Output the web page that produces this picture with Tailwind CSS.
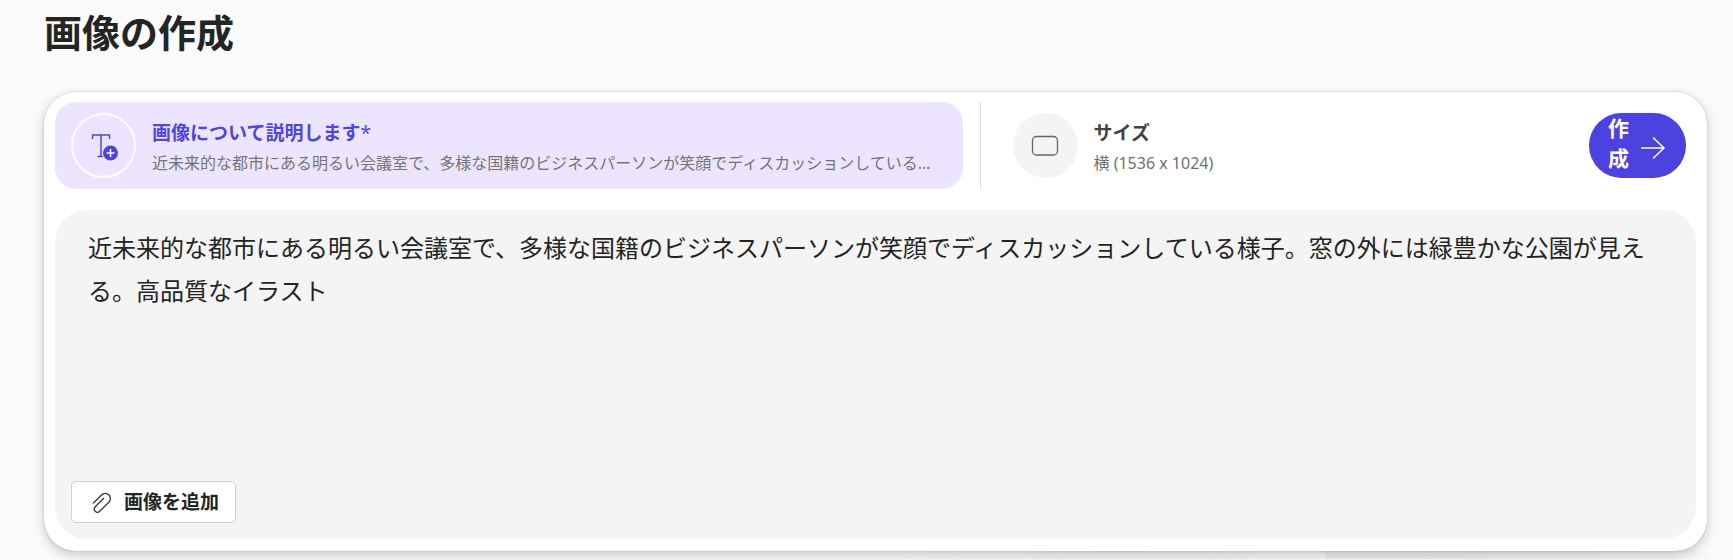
<!DOCTYPE html>
<html lang="ja">
<head>
  <meta charset="UTF-8" />
  <title>画像の作成</title>
  <meta name="viewport" content="width=device-width, initial-scale=1.0">
  <script src="https://cdn.jsdelivr.net/npm/@tailwindcss/browser@4"></script>
</head>
<body class="min-h-screen bg-[#fafafa] font-['Noto_Sans','Noto_Sans_CJK_JP',sans-serif] text-[#242424]">
<main class="pl-11 pr-[26px] pt-1">
  <h1 class="text-[38px] leading-[56px] font-bold">画像の作成</h1>

  <form class="relative mt-8 rounded-[32px] bg-white px-[11px] pt-[10px] pb-3 shadow-[0_0_2px_rgba(0,0,0,0.2),0_4px_12px_rgba(0,0,0,0.2)]">
    <div class="flex items-stretch">
      <!-- prompt tab -->
      <button type="button" class="flex min-w-0 flex-[50] items-center gap-4 rounded-[21px] bg-[#ede5ff] py-[11px] pl-4 pr-[18px] text-left">
        <span class="flex size-[65px] shrink-0 items-center justify-center rounded-full border-2 border-white">
          <svg class="size-8" viewBox="0 0 32 32" fill="none">
            <path d="M4.500 9V5H21.500V9M13 5V26.500M9.500 26.500H15" stroke="#4f46e1" stroke-width="1.500" />
            <circle cx="22.500" cy="23" r="7.500" fill="#4b42df" />
            <path d="M22.500 19V27M18.500 23H26.500" stroke="#fff" stroke-width="1.500" />
          </svg>
        </span>
        <span class="min-w-0 pt-[5px]">
          <span class="block text-[19px] leading-[30px] font-bold text-[#4f46e1]">画像について説明します<span class="font-normal">*</span></span>
          <span class="block truncate text-base leading-[30px] text-[#757575]">近未来的な都市にある明るい会議室で、多様な国籍のビジネスパーソンが笑顔でディスカッションしている様子。窓の外には緑豊かな公園が見える。高品質なイラスト</span>
        </span>
      </button>

      <div class="ml-[17px] mr-4 w-px bg-[#dcdcdc]"></div>

      <!-- size tab -->
      <button type="button" class="flex min-w-0 flex-[33] items-center gap-4 py-[11px] pl-4 text-left">
        <span class="flex size-[65px] shrink-0 items-center justify-center rounded-full bg-[#f4f4f4]">
          <svg class="size-8" viewBox="0 0 32 32" fill="none">
            <rect x="3.500" y="6.500" width="25" height="18.500" rx="4" stroke="#666" stroke-width="1.300" />
          </svg>
        </span>
        <span class="min-w-0 pt-[5px]">
          <span class="block text-[19px] leading-[30px] font-bold text-[#424242]">サイズ</span>
          <span class="block truncate text-base leading-[30px] text-[#707070]">横 (1536 x 1024)</span>
        </span>
      </button>

      <button type="submit" class="mr-[10px] flex h-[65px] w-[97px] items-center justify-center gap-[6px] self-center rounded-full bg-[#4b42df] text-white">
        <span class="w-6 pb-[6px] text-[21px] leading-[30px] font-bold">作成</span>
        <svg class="size-8" viewBox="0 0 32 32" fill="none" stroke="#fff" stroke-width="1.500">
          <path d="M4 18H27M16 7.500L27 18L16 28.500" />
        </svg>
      </button>
    </div>

    <div class="mt-[21px] flex flex-col items-start rounded-[32px] bg-[#f4f4f4] p-4">
      <label for="prompt" class="sr-only">画像について説明します</label>
      <textarea id="prompt" class="h-[255px] w-full resize-none px-[17px] text-2xl leading-[43px] outline-none">近未来的な都市にある明るい会議室で、多様な国籍のビジネスパーソンが笑顔でディスカッションしている様子。窓の外には緑豊かな公園が見える。高品質なイラスト</textarea>
      <button type="button" class="flex h-[42px] items-center gap-2 rounded-[5px] border border-[#d1d1d1] bg-white px-4 pt-px text-[19px] font-bold">
        <svg class="size-7" viewBox="0 0 28 28" fill="none" stroke="#333" stroke-width="1.300" stroke-linecap="round">
          <path d="M5.500 14L13.500 6A5 5 0 0 1 21 13L11.500 22.500A3.200 3.200 0 0 1 7 18L15.500 9.500" />
        </svg>
        画像を追加
      </button>
    </div>
  </form>

  <!-- top edge of the gallery -->
  <div class="flex h-2 justify-end">
    <div class="w-1/4 bg-linear-to-r from-[#f9f9f9] via-[#f1f3f4] to-[#f6f7f7]"></div>
    <div class="w-[23%] bg-linear-to-r from-[#ececea] via-[#f2efed] to-[#f6f6f3]"></div>
  </div>
</main>
</body>
</html>
